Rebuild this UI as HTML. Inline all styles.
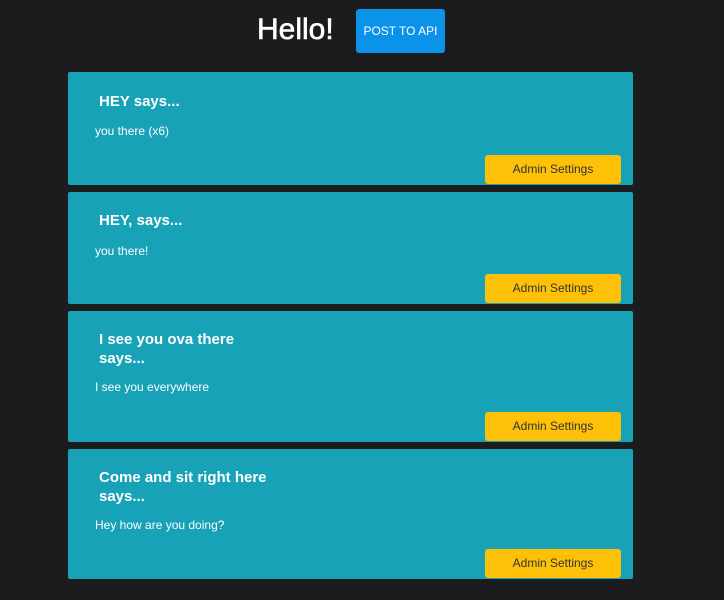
<!DOCTYPE html>
<html><head><style>
body{margin:0;background:#1b1c1e;font-family:"Liberation Sans",sans-serif;width:724px;height:600px;overflow:hidden;position:relative}
h1{position:absolute;left:257px;top:13px;margin:0;color:#fff;font-size:30px;font-weight:normal;-webkit-text-stroke:0.6px #fff}
.post{position:absolute;left:356px;top:9px;width:89px;height:44px;background:#0b93ea;border-radius:3px;color:#fff;font-size:12px;line-height:44px;text-align:center}
.card{position:absolute;left:68px;width:565px;background:#17a2b8;border-radius:2px}
.t{position:absolute;left:31px;width:170px;color:#fff;font-weight:bold;font-size:15px;line-height:19px}
.b{position:absolute;left:27px;color:#fff;font-size:12px}
.a{position:absolute;left:417px;bottom:1px;width:136px;height:29px;background:#ffc107;border-radius:3px;color:#333;font-size:12px;line-height:29px;text-align:center}
</style></head><body>
<h1>Hello!</h1>
<div class="post">POST TO API</div>
<div class="card" style="top:72px;height:113px"><div class="t" style="top:20px">HEY says...</div><div class="b" style="top:52px">you there (x6)</div><div class="a">Admin Settings</div></div>
<div class="card" style="top:192px;height:112px"><div class="t" style="top:19px">HEY, says...</div><div class="b" style="top:52px">you there!</div><div class="a">Admin Settings</div></div>
<div class="card" style="top:311px;height:131px"><div class="t" style="top:19px">I see you ova there says...</div><div class="b" style="top:69px">I see you everywhere</div><div class="a">Admin Settings</div></div>
<div class="card" style="top:449px;height:130px"><div class="t" style="top:19px">Come and sit right here says...</div><div class="b" style="top:69px">Hey how are you doing?</div><div class="a">Admin Settings</div></div>
</body></html>
